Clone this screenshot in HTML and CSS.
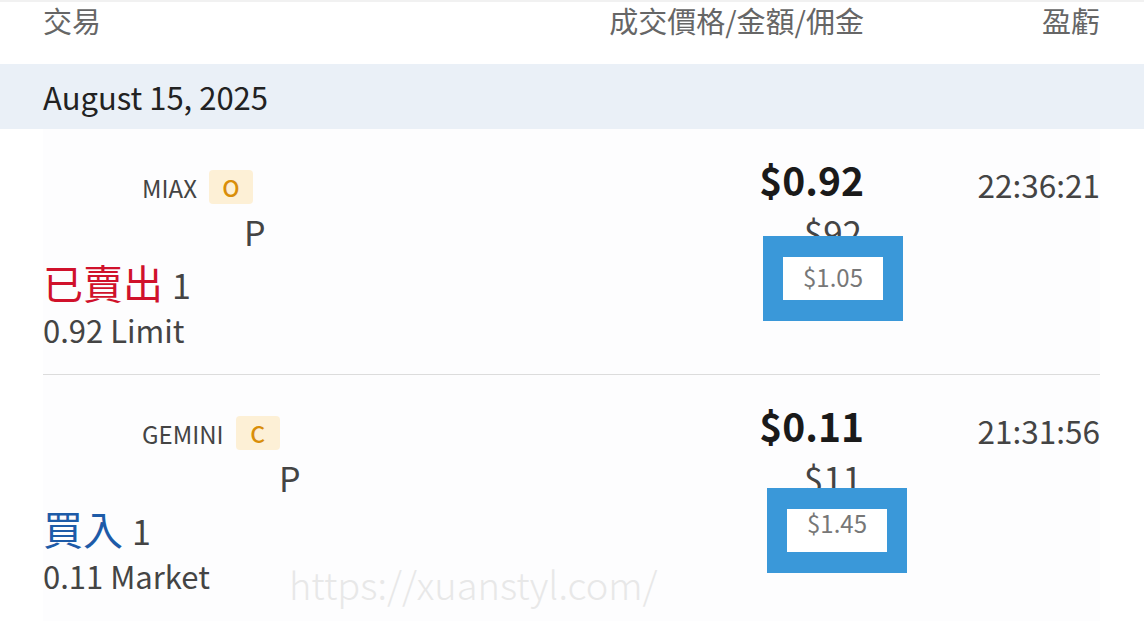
FILE: index.html
```html
<!DOCTYPE html>
<html lang="zh-Hant">
<head>
<meta charset="utf-8">
<title>交易</title>
<link rel="stylesheet" href="styles.css">
</head>
<body>
<div class="page">
  <div class="head">
    <div class="head-col trade">交易</div>
    <div class="head-col price">成交價格/金額/佣金</div>
    <div class="head-col pnl">盈虧</div>
  </div>
  <div class="date-band">August 15, 2025</div>

  <div class="row">
    <div class="left">
      <div class="l-exch"><span class="exch">MIAX</span><span class="badge">O</span></div>
      <div class="l-sym ind-a">P</div>
      <div class="l-side"><span class="side sell">已賣出</span> <span class="qty">1</span></div>
      <div class="l-order">0.92 Limit</div>
    </div>
    <div class="price-col">
      <div class="fill">$0.92</div>
      <div class="amount">$92</div>
      <div class="mark mark-a"><span class="comm">$1.05</span></div>
    </div>
    <div class="time-col">22:36:21</div>
  </div>

  <div class="row row-last">
    <div class="left">
      <div class="l-exch"><span class="exch">GEMINI</span><span class="badge">C</span></div>
      <div class="l-sym ind-b">P</div>
      <div class="l-side"><span class="side buy">買入</span> <span class="qty">1</span></div>
      <div class="l-order">0.11 Market</div>
    </div>
    <div class="price-col">
      <div class="fill">$0.11</div>
      <div class="amount">$11</div>
      <div class="mark mark-b"><span class="comm top">$1.45</span></div>
    </div>
    <div class="time-col">21:31:56</div>
  </div>

  <div class="watermark">https://xuanstyl.com/</div>
</div>
</body>
</html>
```

FILE: styles.css
```css
html, body {
  margin: 0;
  padding: 0;
  background: #ffffff;
}
body {
  font-family: "Noto Sans CJK TC", "Noto Sans", sans-serif;
  color: #444;
}
.page {
  position: relative;
  width: 1144px;
  height: 628px;
  overflow: hidden;
  border-top: 2px solid #f1f1f1;
  box-sizing: border-box;
}
.head {
  height: 62px;
  display: grid;
  grid-template-columns: 1fr 300px 236px;
  padding: 0 44px 0 43px;
  align-items: start;
  font-size: 29px;
  line-height: 36px;
  color: #666;
}
.head-col.price, .head-col.pnl { text-align: right; }
.date-band {
  height: 65px;
  background: #eaf0f7;
  padding-left: 43px;
  font-size: 31px;
  line-height: 66px;
  color: #222;
}
.row {
  display: grid;
  grid-template-columns: 1fr 300px 236px;
  margin: 0 44px 0 43px;
  height: 246px;
  box-sizing: border-box;
  border-bottom: 1px solid #dcdcdc;
  background: #fdfdfe;
}
.row-last { border-bottom: none; }
.left {
  padding-top: 38px;
}
.l-exch {
  height: 40px;
  display: flex;
  align-items: center;
  padding-left: 99px;
}
.exch {
  font-size: 24px;
  color: #444;
}
.badge {
  margin-left: 12px;
  width: 44px;
  height: 34px;
  border-radius: 4px;
  background: #fdf0d6;
  color: #d98e0a;
  font-size: 23px;
  font-weight: 500;
  display: flex;
  align-items: center;
  justify-content: center;
}
.l-sym {
  height: 50px;
  line-height: 50px;
  font-size: 34px;
  color: #444;
}
.ind-a { padding-left: 201px; }
.ind-b { padding-left: 236px; }
.l-side {
  height: 50px;
  line-height: 50px;
  font-size: 40px;
}
.side.sell { color: #d0112b; }
.side.buy { color: #1d5ba8; }
.qty { color: #444; font-size: 34px; }
.l-order {
  height: 46px;
  line-height: 46px;
  font-size: 31px;
  color: #444;
}
.price-col {
  position: relative;
  text-align: right;
  padding-top: 24px;
}
.fill {
  font-size: 39px;
  font-weight: 700;
  line-height: 52px;
  color: #1a1a1a;
}
.amount {
  font-size: 35px;
  line-height: 54px;
  color: #444;
  margin-right: 2px;
}
.mark {
  position: absolute;
  width: 100px;
  height: 43px;
  border: 20px solid #3a98d9;
  border-top-width: 21px;
  border-bottom-width: 21px;
  background: #ffffff;
  display: flex;
  justify-content: center;
}
.mark-a { left: 199px; top: 107px; align-items: center; }
.mark-b { left: 203px; top: 113px; align-items: flex-start; }
.comm {
  font-size: 24px;
  color: #777;
  line-height: 30px;
  margin-top: -4px;
}
.comm.top { line-height: 28px; margin-top: 0; }
.time-col {
  text-align: right;
  padding-top: 34px;
  font-size: 31.5px;
  line-height: 42px;
  color: #444;
}
.watermark {
  position: absolute;
  left: 289px;
  top: 557px;
  font-size: 38px;
  font-weight: 300;
  color: #e8e8e8;
  line-height: 50px;
  pointer-events: none;
}
```
